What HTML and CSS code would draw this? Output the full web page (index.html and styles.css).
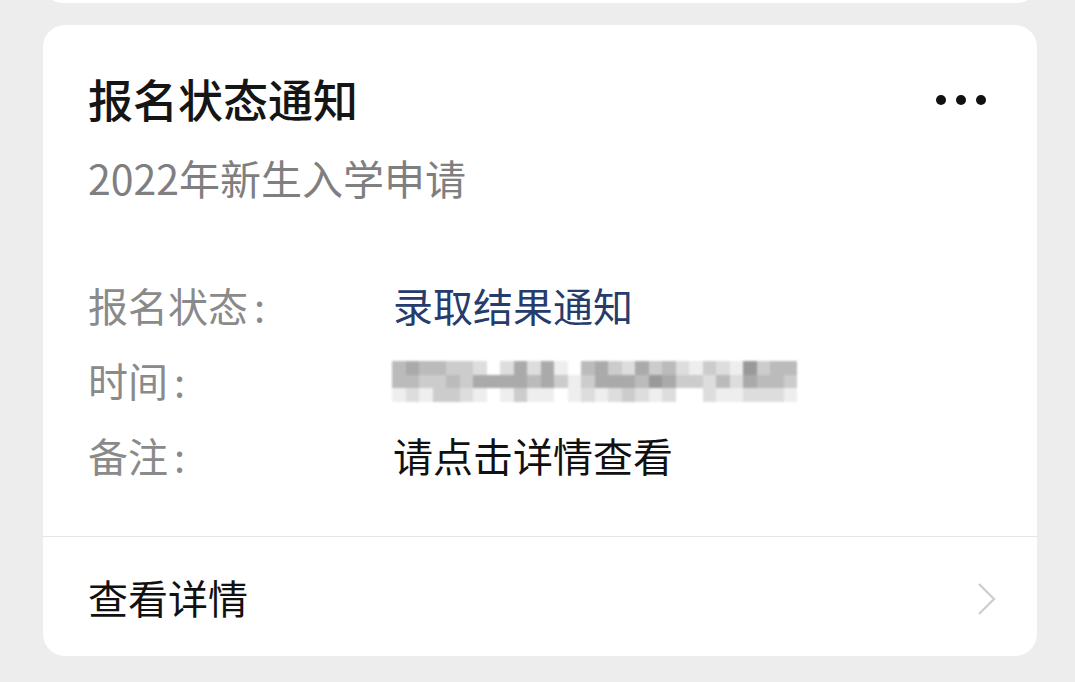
FILE: index.html
```html
<!DOCTYPE html>
<html lang="zh-CN">
<head>
  <meta charset="UTF-8" />
  <meta name="viewport" content="width=device-width, initial-scale=1" />
  <title>报名状态通知</title>
  <link rel="stylesheet" href="styles.css">
</head>
<body>

  <div class="card card-prev"></div>

  <div class="card">
    <div class="card-body">
      <div class="head">
        <h1 class="title">报名状态通知</h1>
        <span class="more" aria-label="更多"><i></i><i></i><i></i></span>
      </div>
      <p class="subtitle">2022年新生入学申请</p>

      <div class="rows">
        <div class="row">
          <span class="label">报名状态<span class="colon">:</span></span>
          <span class="value status">录取结果通知</span>
        </div>
        <div class="row">
          <span class="label">时间<span class="colon">:</span></span>
          <span class="value"><span class="mosaic" id="mosaic"></span></span>
        </div>
        <div class="row">
          <span class="label">备注<span class="colon">:</span></span>
          <span class="value">请点击详情查看</span>
        </div>
      </div>
    </div>

    <a class="footer" href="#">
      <span>查看详情</span>
      <svg class="chevron" width="22" height="36" viewBox="0 0 22 36">
        <path d="M3 3 L18 18 L3 33" fill="none" stroke="#cfcfcf" stroke-width="2.4" />
      </svg>
    </a>
  </div>

  <script>
    // 打码的时间（马赛克格子）
    const rows = [
      'babbccdfdadaefbacdacbdecde9cbb',
      'bbccbcaaaabacecaaab9accdbdabbc',
      'edeccdefeceefededcdedffdeeddde'
    ];
    const mosaic = document.getElementById('mosaic');
    rows.forEach(r => {
      for (const ch of r) {
        const cell = document.createElement('i');
        cell.style.background = '#' + ch.repeat(6);
        mosaic.appendChild(cell);
      }
    });
  </script>

</body>
</html>
```

FILE: styles.css
```css
body {
  margin: 0;
  background: #ededed;
  font-family: "Noto Sans CJK SC", "Noto Sans", sans-serif;
  color: #111;
}

.card {
  margin: 0 38px 0 43px;
  background: #fff;
  border-radius: 22px;
  overflow: hidden;
}

.card-prev {
  height: 40px;
  margin-top: -37px;
  margin-bottom: 22px;
}

.card-body {
  padding: 46px 45px 44px;
}

.head {
  display: flex;
  align-items: center;
  justify-content: space-between;
}

.title {
  margin: 0;
  font-size: 45px;
  line-height: 56px;
  font-weight: 500;
  color: #151515;
}

.more {
  display: flex;
  gap: 10px;
  margin-right: 6px;
  margin-top: 2px;
}

.more i {
  width: 10px;
  height: 10px;
  border-radius: 50%;
  background: #111;
}

.subtitle {
  margin: 22px 0 0;
  font-size: 41px;
  line-height: 56px;
  color: #7f7f7f;
}

.rows {
  margin-top: 62px;
}

.row {
  display: flex;
  align-items: center;
  height: 75px;
  font-size: 40px;
}

.label {
  width: 305px;
  color: #8a8a8a;
}

.colon {
  margin-left: 6px;
}

.value {
  color: #111;
}

.status {
  color: #263c6c;
}

.mosaic {
  display: grid;
  grid-template-columns: repeat(30, 13.5px);
  grid-auto-rows: 13.4px;
  margin-top: 4px;
  margin-left: -1px;
  filter: blur(1px);
}

.footer {
  display: flex;
  align-items: center;
  justify-content: space-between;
  height: 119px;
  padding: 0 39px 0 45px;
  border-top: 1px solid #e6e6e6;
  font-size: 40px;
  color: #111;
  text-decoration: none;
}

.chevron {
  display: block;
  margin-top: 4px;
}
```
